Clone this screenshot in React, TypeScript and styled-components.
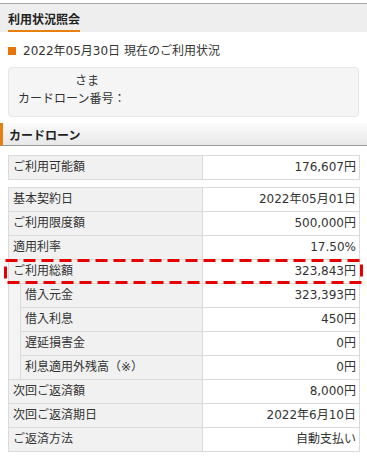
import React from "react";
import styled, { createGlobalStyle } from "styled-components";

const GlobalStyle = createGlobalStyle`
  html, body { margin: 0; padding: 0; background: #fff; }
  body {
    font-family: "DejaVu Sans", "Noto Sans CJK JP", sans-serif;
    font-size: 12px;
    color: #333;
  }
`;

const Page = styled.div`
  width: 367px;
  padding-top: 3px;
`;

const PageHeader = styled.div`
  display: flex;
  height: 28px;
  padding: 0 8px;
  border-top: 1px solid #a8a8a8;
  background: #eeeeee;
`;

const PageTitle = styled.h1`
  display: flex;
  align-items: center;
  margin: 0;
  padding-top: 2px;
  font-size: 12px;
  font-weight: bold;
  color: #222;
  border-bottom: 2px solid #e8800f;
  box-sizing: border-box;
`;

const StatusLine = styled.div`
  display: flex;
  align-items: center;
  margin: 11px 8px 0;
  line-height: 16px;
`;

const Square = styled.span`
  width: 8px;
  height: 8px;
  margin-right: 7px;
  background: #e8740c;
`;

const InfoBox = styled.div`
  margin: 8px 8px 0;
  padding: 4px 9px 8px;
  height: 36px;
  background: #f5f5f5;
  border: 1px solid #e6e6e6;
  border-radius: 4px;
  line-height: 18px;
`;

const NameLine = styled.div`
  padding-left: 57px;
`;

const SectionHeader = styled.h2`
  display: flex;
  align-items: center;
  margin: 6px 0 0;
  height: 22px;
  padding-left: 6px;
  border-left: 3px solid #e8800f;
  border-bottom: 1px solid #999;
  background: linear-gradient(#fbfbfb, #e8e8e8);
  font-size: 12px;
  font-weight: bold;
  color: #222;
`;

const TableWrap = styled.div<{ $top: number }>`
  position: relative;
  margin: ${(p) => p.$top}px 7px 0 8px;
`;

const Table = styled.table`
  width: 352px;
  border-collapse: collapse;
  table-layout: fixed;
`;

const Cell = styled.td`
  border: 1px solid #dadada;
  padding: 0;
  line-height: 23px;
  white-space: nowrap;
`;

const Indent = styled(Cell)`
  background: #f4f4f4;
`;

const Label = styled(Cell)`
  padding-left: 4px;
  background: #f1f1f1;
`;

const Value = styled(Cell)`
  padding-right: 3px;
  text-align: right;
  background: #fff;
`;

const Highlight = styled.svg`
  position: absolute;
  left: -4px;
  top: 72px;
  pointer-events: none;
`;

const Cols = () => (
  <colgroup>
    <col style={{ width: 12 }} />
    <col style={{ width: 182 }} />
    <col />
  </colgroup>
);

type Row = { label: string; value: string };

const mainTop: Row[] = [
  { label: "基本契約日", value: "2022年05月01日" },
  { label: "ご利用限度額", value: "500,000円" },
  { label: "適用利率", value: "17.50%" },
  { label: "ご利用総額", value: "323,843円" },
];

const subRows: Row[] = [
  { label: "借入元金", value: "323,393円" },
  { label: "借入利息", value: "450円" },
  { label: "遅延損害金", value: "0円" },
  { label: "利息適用外残高（※）", value: "0円" },
];

const mainBottom: Row[] = [
  { label: "次回ご返済額", value: "8,000円" },
  { label: "次回ご返済期日", value: "2022年6月10日" },
  { label: "ご返済方法", value: "自動支払い" },
];

export default function App() {
  return (
    <Page>
      <GlobalStyle />
      <PageHeader>
        <PageTitle>利用状況照会</PageTitle>
      </PageHeader>
      <StatusLine>
        <Square />
        2022年05月30日 現在のご利用状況
      </StatusLine>
      <InfoBox>
        <NameLine>さま</NameLine>
        <div>カードローン番号：</div>
      </InfoBox>
      <SectionHeader>カードローン</SectionHeader>
      <TableWrap $top={9}>
        <Table>
          <Cols />
          <tbody>
            <tr>
              <Label colSpan={2}>ご利用可能額</Label>
              <Value>176,607円</Value>
            </tr>
          </tbody>
        </Table>
      </TableWrap>
      <TableWrap $top={7}>
        <Table>
          <Cols />
          <tbody>
            {mainTop.map((r) => (
              <tr key={r.label}>
                <Label colSpan={2}>{r.label}</Label>
                <Value>{r.value}</Value>
              </tr>
            ))}
            {subRows.map((r, i) => (
              <tr key={r.label}>
                {i === 0 && <Indent rowSpan={subRows.length} />}
                <Label>{r.label}</Label>
                <Value>{r.value}</Value>
              </tr>
            ))}
            {mainBottom.map((r) => (
              <tr key={r.label}>
                <Label colSpan={2}>{r.label}</Label>
                <Value>{r.value}</Value>
              </tr>
            ))}
          </tbody>
        </Table>
        <Highlight width={360} height={26} viewBox="0 0 360 26">
          <rect
            x={1.5}
            y={1.5}
            width={356}
            height={22}
            fill="none"
            stroke="#e80000"
            strokeWidth={3}
            strokeDasharray="12 6"
          />
        </Highlight>
      </TableWrap>
    </Page>
  );
}
